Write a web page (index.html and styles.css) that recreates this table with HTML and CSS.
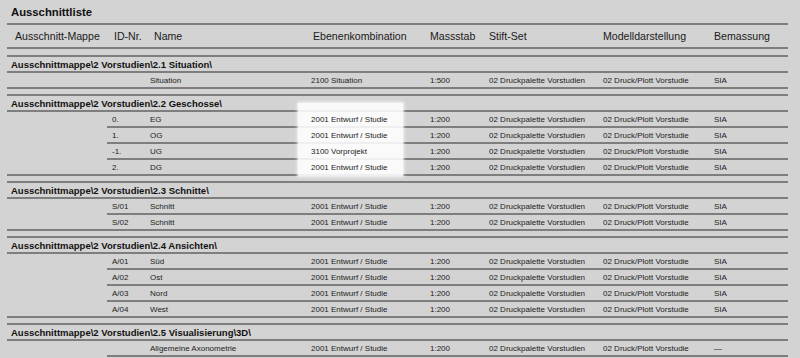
FILE: index.html
```html
<!DOCTYPE html>
<html lang="de">
<head>
<meta charset="utf-8">
<title>Ausschnittliste</title>
<link rel="stylesheet" href="styles.css">
</head>
<body>
<div class="page">
  <div class="title">Ausschnittliste</div>
  <div class="head">
    <span class="h-mappe">Ausschnitt-Mappe</span>
    <span class="h-id">ID-Nr.</span>
    <span class="h-name">Name</span>
    <span class="h-eb">Ebenenkombination</span>
    <span>Massstab</span>
    <span>Stift-Set</span>
    <span>Modelldarstellung</span>
    <span>Bemassung</span>
  </div>

  <section class="group">
    <div class="ghead">Ausschnittmappe\2 Vorstudien\2.1 Situation\</div>
    <div class="rows">
      <div class="row"><span class="id"></span><span>Situation</span><span>2100 Situation</span><span>1:500</span><span>02 Druckpalette Vorstudien</span><span>02 Druck/Plott Vorstudie</span><span>SIA</span></div>
    </div>
  </section>

  <section class="group">
    <div class="ghead">Ausschnittmappe\2 Vorstudien\2.2 Geschosse\</div>
    <div class="rows">
      <div class="row"><span class="id">0.</span><span>EG</span><span>2001 Entwurf / Studie</span><span>1:200</span><span>02 Druckpalette Vorstudien</span><span>02 Druck/Plott Vorstudie</span><span>SIA</span></div>
      <div class="row"><span class="id">1.</span><span>OG</span><span>2001 Entwurf / Studie</span><span>1:200</span><span>02 Druckpalette Vorstudien</span><span>02 Druck/Plott Vorstudie</span><span>SIA</span></div>
      <div class="row"><span class="id">-1.</span><span>UG</span><span>3100 Vorprojekt</span><span>1:200</span><span>02 Druckpalette Vorstudien</span><span>02 Druck/Plott Vorstudie</span><span>SIA</span></div>
      <div class="row"><span class="id">2.</span><span>DG</span><span>2001 Entwurf / Studie</span><span>1:200</span><span>02 Druckpalette Vorstudien</span><span>02 Druck/Plott Vorstudie</span><span>SIA</span></div>
    </div>
  </section>

  <section class="group">
    <div class="ghead">Ausschnittmappe\2 Vorstudien\2.3 Schnitte\</div>
    <div class="rows">
      <div class="row"><span class="id">S/01</span><span>Schnitt</span><span>2001 Entwurf / Studie</span><span>1:200</span><span>02 Druckpalette Vorstudien</span><span>02 Druck/Plott Vorstudie</span><span>SIA</span></div>
      <div class="row"><span class="id">S/02</span><span>Schnitt</span><span>2001 Entwurf / Studie</span><span>1:200</span><span>02 Druckpalette Vorstudien</span><span>02 Druck/Plott Vorstudie</span><span>SIA</span></div>
    </div>
  </section>

  <section class="group">
    <div class="ghead">Ausschnittmappe\2 Vorstudien\2.4 Ansichten\</div>
    <div class="rows">
      <div class="row"><span class="id">A/01</span><span>Süd</span><span>2001 Entwurf / Studie</span><span>1:200</span><span>02 Druckpalette Vorstudien</span><span>02 Druck/Plott Vorstudie</span><span>SIA</span></div>
      <div class="row"><span class="id">A/02</span><span>Ost</span><span>2001 Entwurf / Studie</span><span>1:200</span><span>02 Druckpalette Vorstudien</span><span>02 Druck/Plott Vorstudie</span><span>SIA</span></div>
      <div class="row"><span class="id">A/03</span><span>Nord</span><span>2001 Entwurf / Studie</span><span>1:200</span><span>02 Druckpalette Vorstudien</span><span>02 Druck/Plott Vorstudie</span><span>SIA</span></div>
      <div class="row"><span class="id">A/04</span><span>West</span><span>2001 Entwurf / Studie</span><span>1:200</span><span>02 Druckpalette Vorstudien</span><span>02 Druck/Plott Vorstudie</span><span>SIA</span></div>
    </div>
  </section>

  <section class="group open">
    <div class="ghead">Ausschnittmappe\2 Vorstudien\2.5 Visualisierung\3D\</div>
    <div class="rows">
      <div class="row"><span class="id"></span><span>Allgemeine Axonometrie</span><span>2001 Entwurf / Studie</span><span>1:200</span><span>02 Druckpalette Vorstudien</span><span>02 Druck/Plott Vorstudie</span><span>—</span></div>
    </div>
  </section>

  <div class="highlight"></div>
</div>
</body>
</html>
```

FILE: styles.css
```css
html, body {
  margin: 0;
  padding: 0;
  background: #d3d3d3;
}

body {
  font-family: "Liberation Sans", Arial, sans-serif;
  color: #1e1e1e;
}

.page {
  position: relative;
  margin: 0 12px 0 7px;
}

.title {
  height: 23px;
  line-height: 24px;
  padding-left: 4px;
  font-size: 11.3px;
  font-weight: bold;
  color: #111;
  border-bottom: 2px solid #7e7e7e;
}

.head {
  display: grid;
  grid-template-columns: 100px 43px 161px 119px 59px 114px 111px 1fr;
  height: 22px;
  line-height: 23px;
  font-size: 10.6px;
  color: #1a1a1a;
  border-bottom: 2px solid #7e7e7e;
  margin-bottom: 6px;
  white-space: nowrap;
}

.h-mappe { padding-left: 8px; }
.h-id { padding-left: 7px; }
.h-name { padding-left: 4px; }
.h-eb { padding-left: 2px; }

.group {
  border-top: 2px solid #7e7e7e;
  border-bottom: 2px solid #7e7e7e;
  margin-bottom: 5px;
}

.group.open {
  border-bottom: 0;
}

.ghead {
  height: 14px;
  line-height: 15px;
  padding-left: 4px;
  font-size: 9.5px;
  font-weight: bold;
  color: #111;
  border-bottom: 2px solid #7e7e7e;
  white-space: nowrap;
}

.rows {
  margin-left: 100px;
}

.row {
  display: grid;
  grid-template-columns: 43px 161px 119px 59px 114px 111px 1fr;
  height: 14px;
  line-height: 15px;
  font-size: 8px;
  color: #222;
  white-space: nowrap;
  border-bottom: 2px solid #7e7e7e;
}

.row span {
  position: relative;
  z-index: 2;
}

.row:last-child {
  border-bottom: 0;
}

.group.open .row:last-child {
  border-bottom: 2px solid #7e7e7e;
}

.row .id {
  padding-left: 5px;
}

.highlight {
  position: absolute;
  z-index: 1;
  left: 291px;
  top: 103px;
  width: 105px;
  height: 73px;
  background: rgba(255, 255, 255, 0.88);
  box-shadow: 0 0 3px 1px rgba(255, 255, 255, 0.8);
  pointer-events: none;
}
```
